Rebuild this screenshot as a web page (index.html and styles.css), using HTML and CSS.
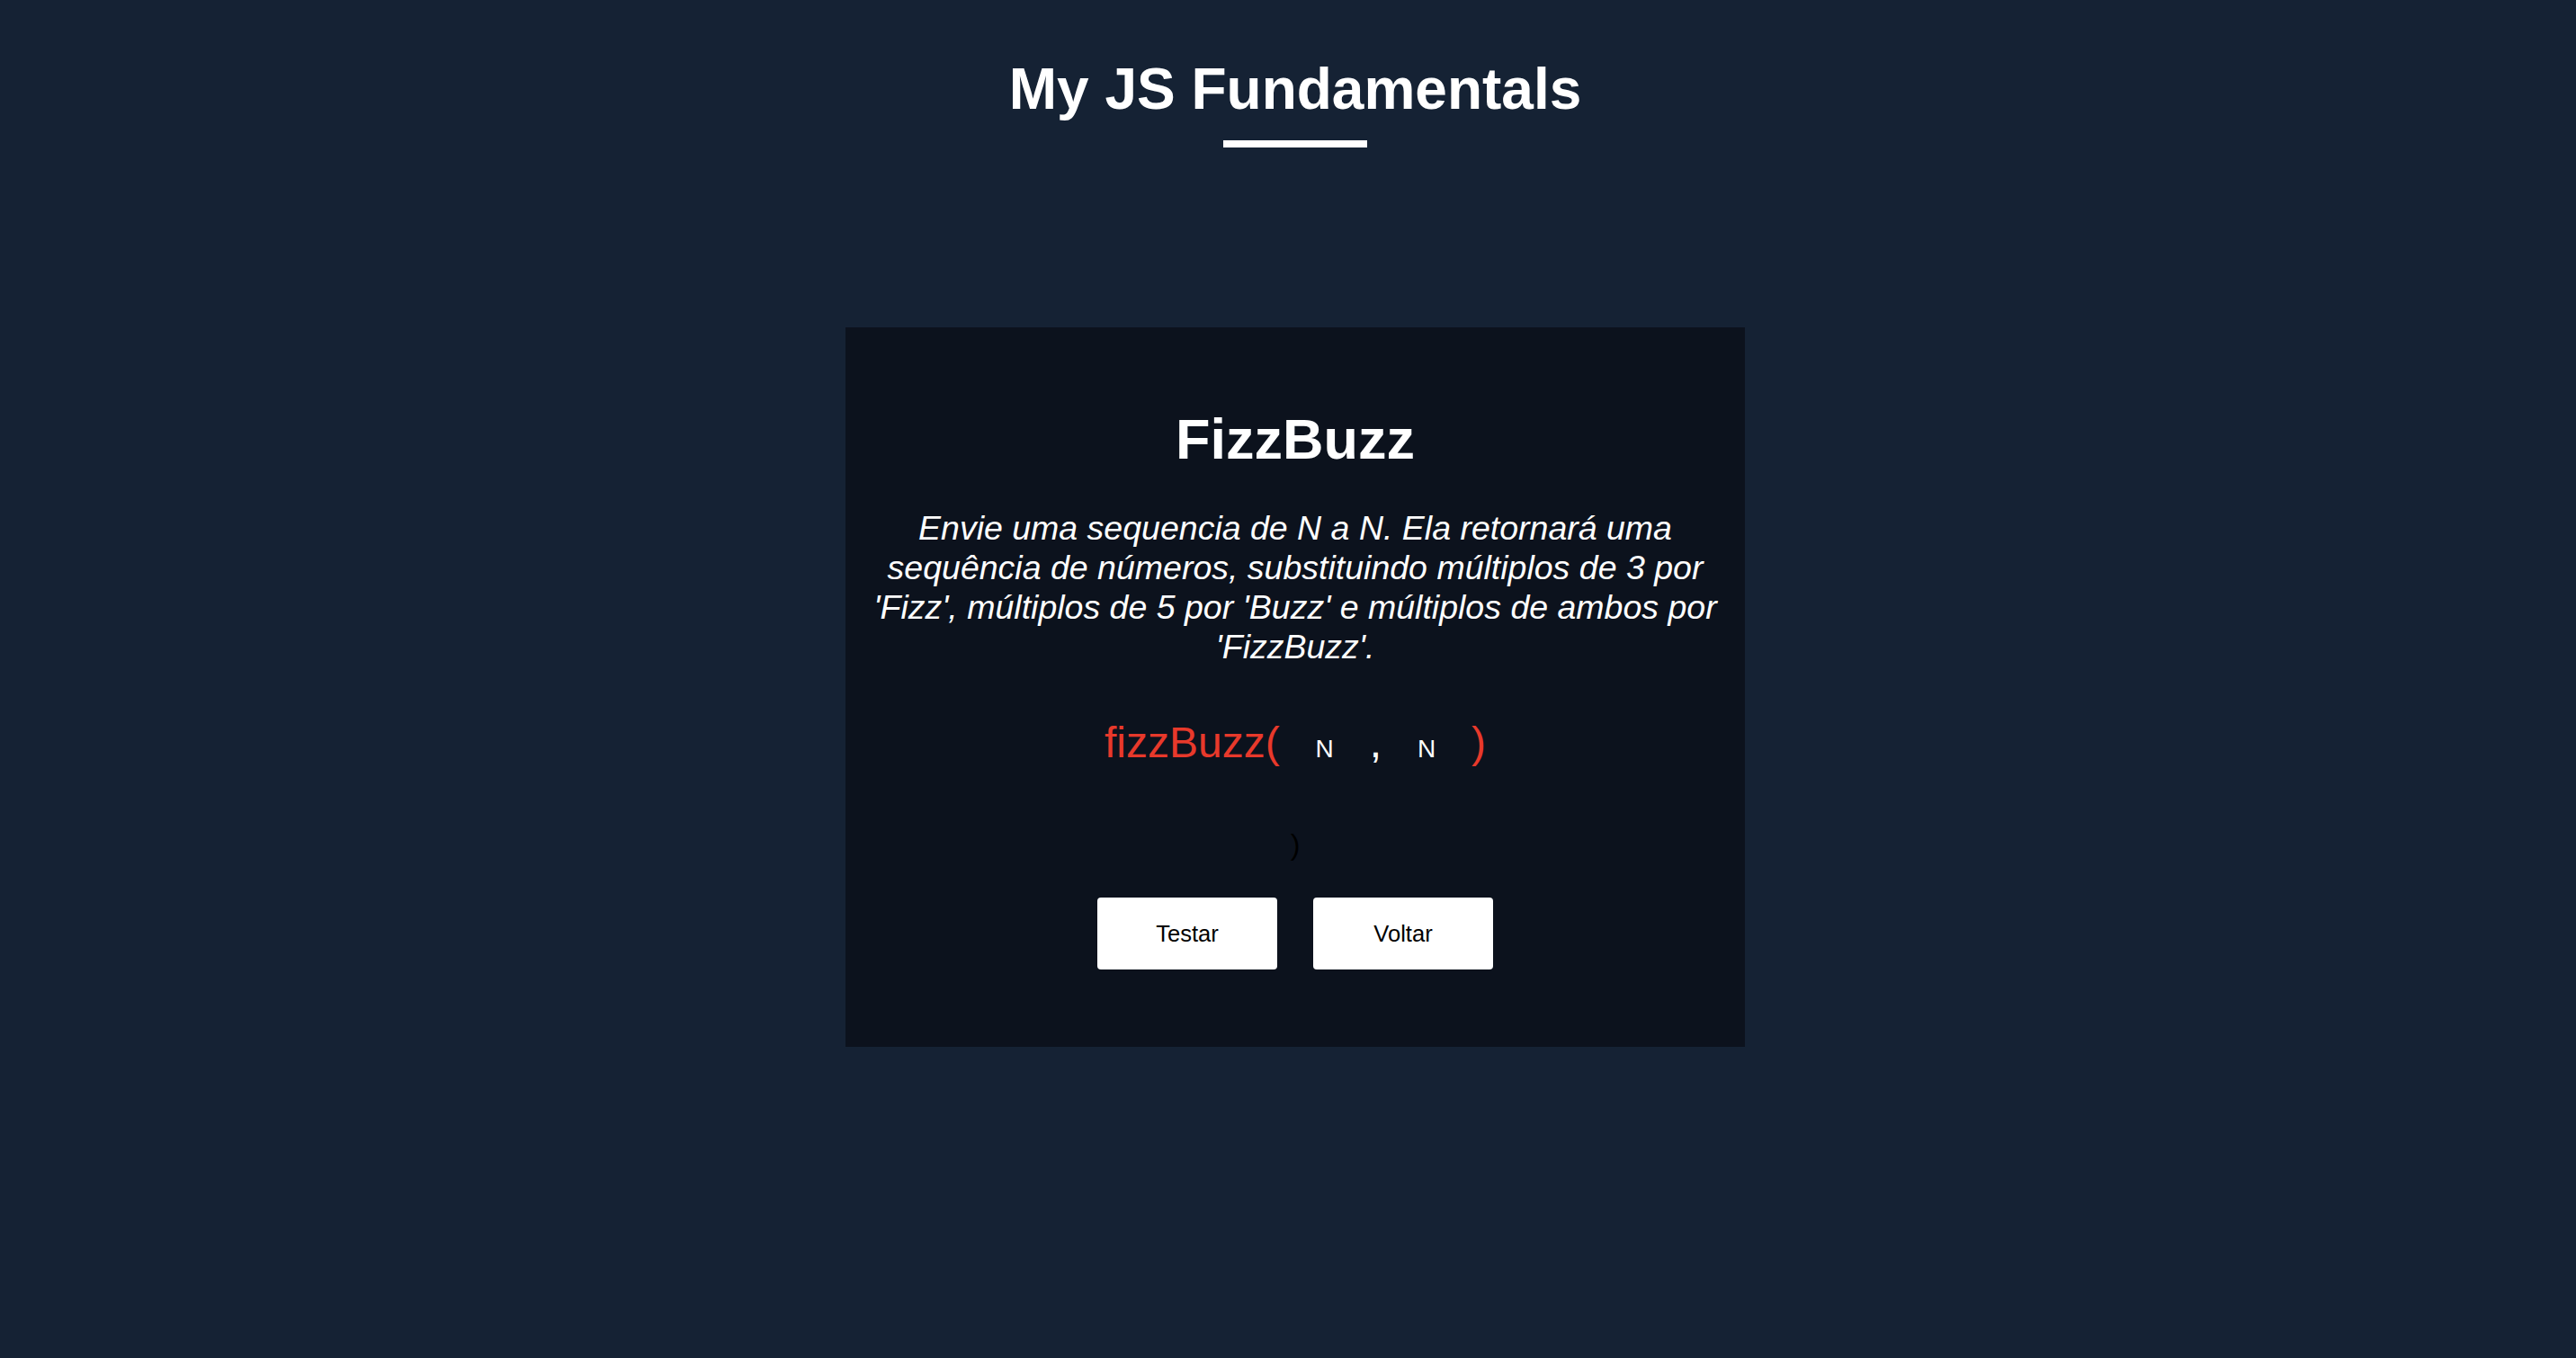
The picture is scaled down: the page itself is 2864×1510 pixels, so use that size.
FILE: index.html
```html
<!DOCTYPE html>
<html lang="pt-BR">
<head>
<meta charset="utf-8">
<title>My JS Fundamentals</title>
<link rel="stylesheet" href="styles.css">
</head>
<body>
<main class="page">
  <header class="header">
    <h1 class="title">My JS Fundamentals</h1>
    <div class="title-bar"></div>
  </header>
  <section class="card">
    <h2 class="card-title">FizzBuzz</h2>
    <p class="card-desc">Envie uma sequencia de N a N. Ela retornará uma sequência de números, substituindo múltiplos de 3 por 'Fizz', múltiplos de 5 por 'Buzz' e múltiplos de ambos por 'FizzBuzz'.</p>
    <div class="call">
      <span class="fn">fizzBuzz(</span>
      <input class="arg" type="text" placeholder="N">
      <span class="comma">,</span>
      <input class="arg" type="text" placeholder="N">
      <span class="fn">)</span>
    </div>
    <p class="result">)</p>
    <div class="actions">
      <button class="btn" type="button">Testar</button>
      <button class="btn" type="button">Voltar</button>
    </div>
  </section>
</main>
</body>
</html>
```
FILE: styles.css
```css
html, body {
  margin: 0;
  padding: 0;
  background: #152234;
}
body {
  font-family: "Liberation Sans", Arial, Helvetica, sans-serif;
  color: #fff;
}
.page {
  padding-left: 16px;
  display: flex;
  flex-direction: column;
  align-items: center;
  min-height: 1510px;
  box-sizing: border-box;
}
.header {
  padding-top: 67px;
  display: flex;
  flex-direction: column;
  align-items: center;
}
.title {
  margin: 0;
  font-size: 64px;
  line-height: 64px;
  font-weight: 700;
  color: #fff;
}
.title-bar {
  margin-top: 25px;
  width: 160px;
  height: 8px;
  background: #fff;
}
.card {
  margin-top: 200px;
  width: 1000px;
  height: 800px;
  box-sizing: border-box;
  padding: 93px 26px 0;
  background: #0c121d;
  display: flex;
  flex-direction: column;
  align-items: center;
  text-align: center;
}
.card-title {
  margin: 0;
  font-size: 63px;
  line-height: 63px;
  font-weight: 700;
}
.card-desc {
  margin: 45px 0 0;
  font-size: 37.5px;
  line-height: 44px;
  font-style: italic;
}
.call {
  margin-top: 61px;
  display: flex;
  align-items: baseline;
  justify-content: center;
}
.fn {
  font-size: 48px;
  line-height: 48px;
  color: #e8392b;
}
.comma {
  font-size: 48px;
  line-height: 48px;
  color: #fff;
}
.arg {
  width: 100px;
  height: 48px;
  padding: 0;
  margin: 0;
  border: none;
  outline: none;
  background: transparent;
  color: #fff;
  text-align: center;
  font-family: "Liberation Sans", Arial, sans-serif;
  font-size: 28px;
}
.arg::placeholder {
  color: #fff;
  opacity: 1;
}
.result {
  margin: 66px 0 0;
  font-size: 32px;
  line-height: 32px;
  color: #000;
}
.actions {
  margin-top: 43px;
  display: flex;
  gap: 40px;
}
.btn {
  width: 200px;
  height: 80px;
  border: none;
  border-radius: 4px;
  background: #fff;
  color: #000;
  font-family: "Liberation Sans", Arial, sans-serif;
  font-size: 25.6px;
  cursor: pointer;
}
```
